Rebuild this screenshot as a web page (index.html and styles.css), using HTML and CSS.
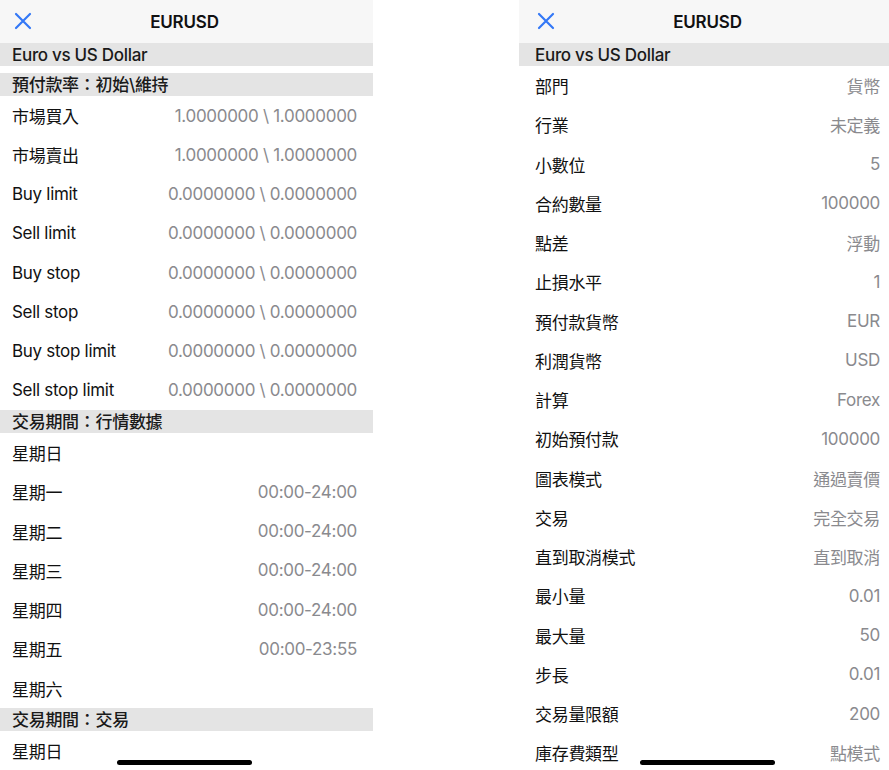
FILE: index.html
```html
<!DOCTYPE html>
<html lang="zh-Hant">
<head>
    <meta charset="UTF-8">
    <title>EURUSD</title>
    <link rel="stylesheet" href="styles.css">
</head>
<body>
    <div class="screens">

        <div class="panel panel-left">
            <div class="nav">
                <svg class="close" width="18" height="18" viewBox="0 0 18 18">
                    <path d="M2 2 L16 16 M16 2 L2 16" stroke="#3478f6" stroke-width="2.2" stroke-linecap="round" fill="none"/>
                </svg>
                <div class="nav-title">EURUSD</div>
            </div>
            <div class="section">Euro vs US Dollar</div>
            <div class="spacer"></div>
            <div class="section">預付款率：初始\維持</div>
            <div class="row"><span>市場買入</span><span class="value">1.0000000 \ 1.0000000</span></div>
            <div class="row"><span>市場賣出</span><span class="value">1.0000000 \ 1.0000000</span></div>
            <div class="row"><span>Buy limit</span><span class="value">0.0000000 \ 0.0000000</span></div>
            <div class="row"><span>Sell limit</span><span class="value">0.0000000 \ 0.0000000</span></div>
            <div class="row"><span>Buy stop</span><span class="value">0.0000000 \ 0.0000000</span></div>
            <div class="row"><span>Sell stop</span><span class="value">0.0000000 \ 0.0000000</span></div>
            <div class="row"><span>Buy stop limit</span><span class="value">0.0000000 \ 0.0000000</span></div>
            <div class="row"><span>Sell stop limit</span><span class="value">0.0000000 \ 0.0000000</span></div>
            <div class="section">交易期間：行情數據</div>
            <div class="row"><span>星期日</span><span class="value"></span></div>
            <div class="row"><span>星期一</span><span class="value">00:00-24:00</span></div>
            <div class="row"><span>星期二</span><span class="value">00:00-24:00</span></div>
            <div class="row"><span>星期三</span><span class="value">00:00-24:00</span></div>
            <div class="row"><span>星期四</span><span class="value">00:00-24:00</span></div>
            <div class="row"><span>星期五</span><span class="value">00:00-23:55</span></div>
            <div class="row"><span>星期六</span><span class="value"></span></div>
            <div class="section">交易期間：交易</div>
            <div class="row"><span>星期日</span><span class="value"></span></div>
            <div class="home-bar"></div>
        </div>

        <div class="panel panel-right">
            <div class="nav">
                <svg class="close" width="18" height="18" viewBox="0 0 18 18">
                    <path d="M2 2 L16 16 M16 2 L2 16" stroke="#3478f6" stroke-width="2.2" stroke-linecap="round" fill="none"/>
                </svg>
                <div class="nav-title">EURUSD</div>
            </div>
            <div class="section">Euro vs US Dollar</div>
            <div class="row"><span>部門</span><span class="value">貨幣</span></div>
            <div class="row"><span>行業</span><span class="value">未定義</span></div>
            <div class="row"><span>小數位</span><span class="value">5</span></div>
            <div class="row"><span>合約數量</span><span class="value">100000</span></div>
            <div class="row"><span>點差</span><span class="value">浮動</span></div>
            <div class="row"><span>止損水平</span><span class="value">1</span></div>
            <div class="row"><span>預付款貨幣</span><span class="value">EUR</span></div>
            <div class="row"><span>利潤貨幣</span><span class="value">USD</span></div>
            <div class="row"><span>計算</span><span class="value">Forex</span></div>
            <div class="row"><span>初始預付款</span><span class="value">100000</span></div>
            <div class="row"><span>圖表模式</span><span class="value">通過賣價</span></div>
            <div class="row"><span>交易</span><span class="value">完全交易</span></div>
            <div class="row"><span>直到取消模式</span><span class="value">直到取消</span></div>
            <div class="row"><span>最小量</span><span class="value">0.01</span></div>
            <div class="row"><span>最大量</span><span class="value">50</span></div>
            <div class="row"><span>步長</span><span class="value">0.01</span></div>
            <div class="row"><span>交易量限額</span><span class="value">200</span></div>
            <div class="row"><span>庫存費類型</span><span class="value">點模式</span></div>
            <div class="home-bar"></div>
        </div>

    </div>
</body>
</html>
```

FILE: styles.css
```css
html, body {
    margin: 0;
    padding: 0;
    background: #ffffff;
}

body {
    width: 889px;
    height: 770px;
    overflow: hidden;
    font-family: Inter, "Noto Sans CJK TC", sans-serif;
    color: #111111;
}

.screens {
    display: flex;
    gap: 146px;
}

.panel {
    position: relative;
    height: 770px;
    overflow: hidden;
    background: #ffffff;
}

.panel-left {
    width: 373px;
    --pad-l: 12px;
    --pad-r: 16px;
}

.panel-right {
    width: 370px;
    --pad-l: 16px;
    --pad-r: 9px;
}

.nav {
    position: relative;
    height: 43px;
    background: #f7f7f7;
    display: flex;
    align-items: center;
    justify-content: center;
    padding: 0 var(--pad-r) 0 var(--pad-l);
}

.close {
    position: absolute;
    left: calc(var(--pad-l) + 2px);
    top: 12px;
}

.nav-title {
    font-size: 17px;
    font-weight: 600;
    letter-spacing: -0.2px;
}

.section {
    height: 23px;
    line-height: 25px;
    overflow: hidden;
    background: #e4e4e4;
    padding: 0 var(--pad-r) 0 var(--pad-l);
    font-size: 17px;
    font-weight: 500;
    letter-spacing: -0.3px;
    color: #1a1a1a;
    white-space: nowrap;
}

.spacer {
    height: 7px;
}

.row {
    height: 39.25px;
    display: flex;
    align-items: center;
    justify-content: space-between;
    padding: 0 var(--pad-r) 0 var(--pad-l);
    font-size: 17px;
    letter-spacing: -0.3px;
    white-space: nowrap;
}

.value {
    color: #8a8a8e;
}

.home-bar {
    position: absolute;
    bottom: 5px;
    width: 135px;
    height: 5px;
    border-radius: 3px;
    background: #000000;
}

.panel-left .home-bar {
    left: 117px;
}

.panel-right .home-bar {
    left: 121px;
}
```
